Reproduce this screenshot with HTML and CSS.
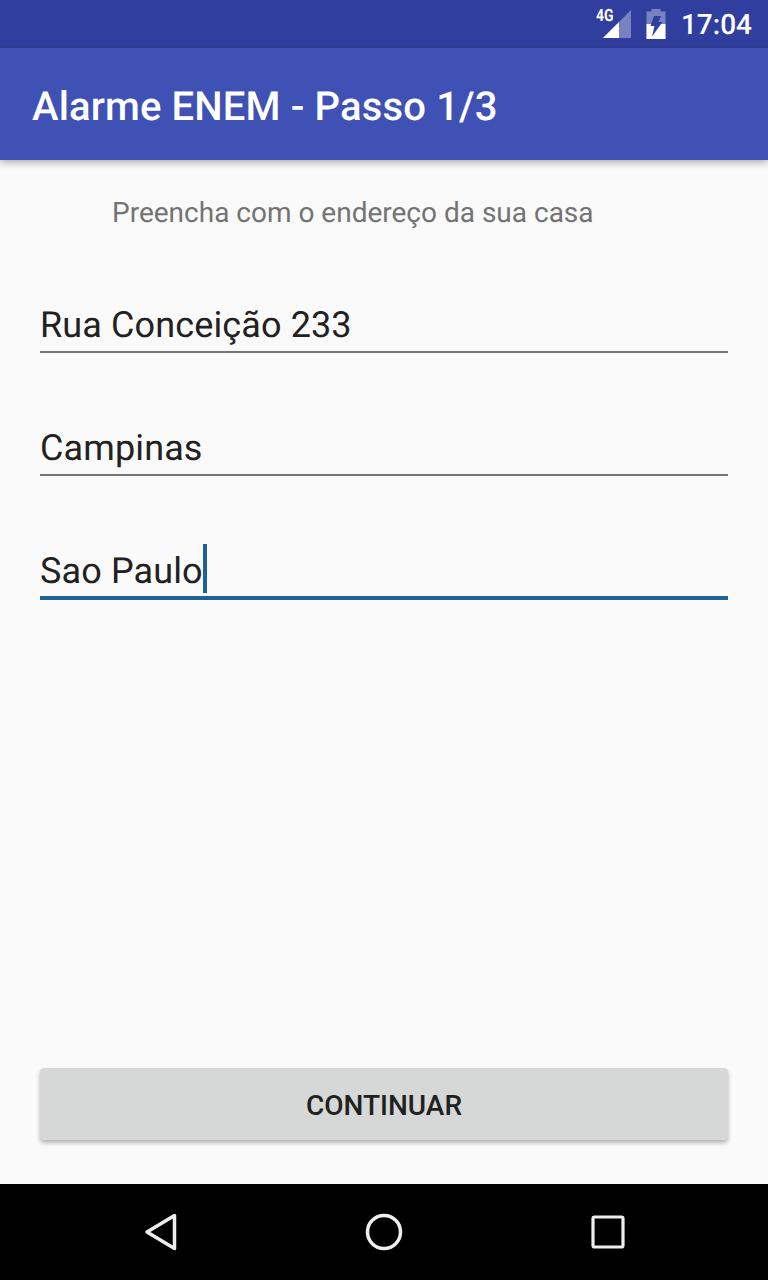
FILE: index.html
```html
<!DOCTYPE html>
<html lang="pt">
<head>
<meta charset="utf-8">
<title>Alarme ENEM</title>
<link rel="stylesheet" href="styles.css">
</head>
<body>
<div class="status-bar">
  <svg class="ic-signal" width="30" height="30" viewBox="0 0 30 30">
    <polygon points="29,1 29,29 1,29" fill="#fff" fill-opacity="0.35"/>
    <polygon points="17,13 17,29 1,29" fill="#fff"/>
  </svg>
  <span class="net">4G</span>
  <svg class="ic-battery" width="20" height="30" viewBox="0 0 20 30">
    <path d="M5.500 0h9v2.500h5v27.500h-19v-27.500h5z" fill="#fff" fill-opacity="0.35"/>
    <path d="M0.500 15h19v15h-19z" fill="#fff"/>
    <path d="M8 7h7l-2.500 6h4l-10.500 14.500 2.500-10.500h-4z" fill="#303f9f"/>
  </svg>
  <span class="clock">17:04</span>
</div>
<header class="app-bar"><h1 class="title">Alarme ENEM - Passo 1/3</h1></header>
<main class="content">
  <p class="hint">Preencha com o endereço da sua casa</p>
  <div class="field"><span class="value">Rua Conceição 233</span></div>
  <div class="field"><span class="value">Campinas</span></div>
  <div class="field focused"><span class="value">Sao Paulo</span><span class="caret"></span></div>
  <div class="spacer"></div>
  <button class="btn" type="button">CONTINUAR</button>
</main>
<nav class="nav-bar">
  <svg width="40" height="40" viewBox="0 0 40 40"><path d="M34.500 3.500 L7 20 L34.500 36.500 Z" fill="none" stroke="#eee" stroke-width="3.500" stroke-linejoin="round"/></svg>
  <svg width="40" height="40" viewBox="0 0 40 40"><circle cx="20" cy="20" r="16.500" fill="none" stroke="#eee" stroke-width="3.500"/></svg>
  <svg width="40" height="40" viewBox="0 0 40 40"><rect x="5" y="5" width="30" height="30" rx="1.500" fill="none" stroke="#eee" stroke-width="3.200"/></svg>
</nav>
</body>
</html>
```
FILE: styles.css
```css
* { box-sizing: border-box; }
html, body { margin: 0; padding: 0; }
body {
  width: 768px;
  height: 1280px;
  display: flex;
  flex-direction: column;
  background: #fafafa;
  font-family: Roboto, "Liberation Sans", sans-serif;
  text-rendering: geometricPrecision;
  overflow: hidden;
}
.status-bar {
  position: relative;
  height: 48px;
  background: #303f9f;
  color: #fff;
  display: flex;
  align-items: center;
  justify-content: flex-end;
  padding-right: 16px;
}
.ic-signal { margin-right: 14px; }
.net {
  position: absolute;
  left: 596px;
  top: 8px;
  font-size: 17px;
  line-height: 16px;
  font-weight: 700;
  transform: scaleX(0.82);
  transform-origin: left center;
}
.ic-battery { margin-right: 15px; }
.clock { font-size: 28px; font-weight: 500; line-height: 32px; position: relative; top: 1px; }
.app-bar {
  position: relative;
  z-index: 1;
  height: 112px;
  background: #3f51b5;
  display: flex;
  align-items: center;
  padding-left: 32px;
  box-shadow: 0 2px 8px rgba(0,0,0,0.35);
}
.title {
  margin: 0;
  color: #fff;
  font-size: 40px;
  font-weight: 500;
  line-height: 48px;
  letter-spacing: 0.14px;
  position: relative;
  top: 3px;
}
.content {
  flex: 1;
  display: flex;
  flex-direction: column;
  padding: 0 40px 44px;
}
.hint {
  margin: 36px 0 0 72px;
  font-size: 28px;
  line-height: 33px;
  color: #737373;
}
.field {
  display: flex;
  align-items: flex-end;
  height: 58px;
  margin-top: 66px;
  border-bottom: 2px solid #757575;
  color: #212121;
  font-size: 36px;
  line-height: 46px;
  letter-spacing: 0.12px;
}
.field + .field { margin-top: 65px; }
.value { display: block; padding-bottom: 3px; }
.field.focused { height: 60px; margin-top: 64px; border-bottom: 4px solid #1f6095; }
.focused .value { padding-bottom: 2px; }
.caret { width: 4px; height: 49px; background: #1f6095; margin-bottom: 3px; }
.spacer { flex: 1; }
.btn {
  height: 72px;
  padding: 2px 0 0;
  border: 0;
  border-radius: 4px;
  background: #d6d7d7;
  color: #212121;
  font-family: inherit;
  font-size: 28px;
  font-weight: 500;
  box-shadow: 0 3px 4px rgba(0,0,0,0.28);
}
.nav-bar {
  height: 96px;
  background: #000;
  display: flex;
  align-items: center;
  justify-content: space-between;
  padding: 0 140px;
}
```
